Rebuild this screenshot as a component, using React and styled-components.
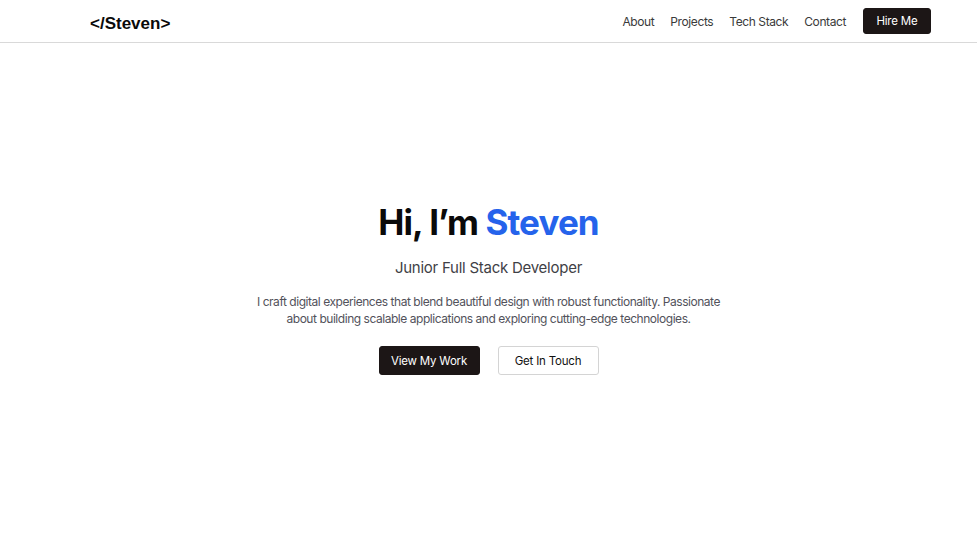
import React from "react";
import styled, { createGlobalStyle } from "styled-components";

const GlobalStyle = createGlobalStyle`
  html, body {
    margin: 0;
    padding: 0;
    background: #fff;
    font-family: Inter, "Noto Sans", sans-serif;
    color: #111;
  }
`

const links = ["About", "Projects", "Tech Stack", "Contact"];

const App = () => {
    return (
        <>
            <GlobalStyle/>
            <StyledHeader>
                <StyledLogo>&lt;/Steven&gt;</StyledLogo>
                <StyledNav>
                    {links.map(link => <StyledLink key={link}>{link}</StyledLink>)}
                    <StyledButton dark small>Hire Me</StyledButton>
                </StyledNav>
            </StyledHeader>
            <StyledHero>
                <StyledTitle>Hi, I’m <StyledName>Steven</StyledName></StyledTitle>
                <StyledRole>Junior Full Stack Developer</StyledRole>
                <StyledIntro>
                    I craft digital experiences that blend beautiful design with robust functionality. Passionate<br/>
                    about building scalable applications and exploring cutting-edge technologies.
                </StyledIntro>
                <StyledActions>
                    <StyledButton dark>View My Work</StyledButton>
                    <StyledButton>Get In Touch</StyledButton>
                </StyledActions>
            </StyledHero>
        </>
    )
}

export default App;

const StyledHeader = styled.header`
  display: flex;
  align-items: center;
  justify-content: space-between;
  height: 42px;
  padding: 0 46px 0 90px;
  border-bottom: 1px solid #d9d9d9;
`

const StyledLogo = styled.div`
  margin-top: 5px;
  font-family: "Liberation Sans", Arial, sans-serif;
  font-weight: 700;
  font-size: 17px;
  color: #0a0a0a;
`

const StyledNav = styled.nav`
  display: flex;
  align-items: center;
  gap: 16px;
`

const StyledLink = styled.a`
  font-size: 12px;
  letter-spacing: -0.4px;
  color: #3a3a3a;
  cursor: pointer;
`

const StyledButton = styled.button`
  font-family: Inter, sans-serif;
  font-size: 11.5px;
  letter-spacing: -0.2px;
  height: ${p => p.small ? "26px" : "29px"};
  width: ${p => p.small ? "68px" : "101px"};
  margin-left: ${p => p.small ? "1px" : "0"};
  border-radius: 3px;
  border: 1px solid ${p => p.dark ? "#1c1616" : "#d4d4d4"};
  background: ${p => p.dark ? "#1c1616" : "#fff"};
  color: ${p => p.dark ? "#fff" : "#111"};
  cursor: pointer;
`

const StyledHero = styled.main`
  display: flex;
  flex-direction: column;
  align-items: center;
  text-align: center;
  padding-top: 157px;
`

const StyledTitle = styled.h1`
  margin: 0;
  font-size: 35px;
  font-weight: 700;
  letter-spacing: -0.9px;
  line-height: 44px;
  color: #0a0a0a;
`

const StyledName = styled.span`
  color: #2563eb;
`

const StyledRole = styled.h2`
  margin: 13px 0 0;
  font-size: 15px;
  font-weight: 400;
  letter-spacing: -0.25px;
  line-height: 22px;
  color: #3f3f46;
`

const StyledIntro = styled.p`
  margin: 14px 0 0;
  font-size: 12px;
  letter-spacing: -0.46px;
  line-height: 17px;
  color: #52525b;
  white-space: nowrap;
`

const StyledActions = styled.div`
  display: flex;
  gap: 18px;
  margin-top: 19px;
`
